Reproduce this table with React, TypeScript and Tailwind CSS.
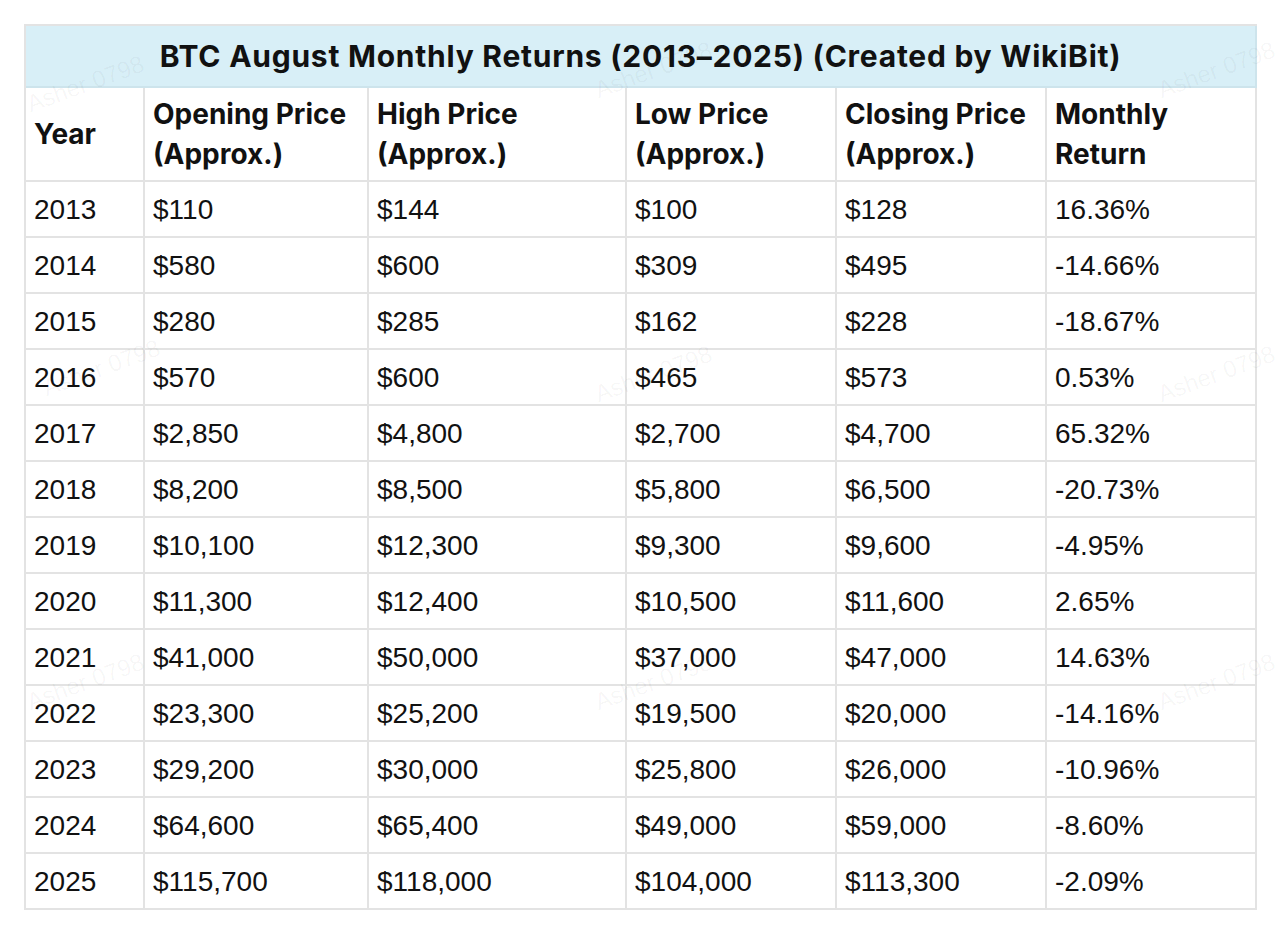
import React from "react";

const rows: string[][] = [
  ["2013", "$110", "$144", "$100", "$128", "16.36%"],
  ["2014", "$580", "$600", "$309", "$495", "-14.66%"],
  ["2015", "$280", "$285", "$162", "$228", "-18.67%"],
  ["2016", "$570", "$600", "$465", "$573", "0.53%"],
  ["2017", "$2,850", "$4,800", "$2,700", "$4,700", "65.32%"],
  ["2018", "$8,200", "$8,500", "$5,800", "$6,500", "-20.73%"],
  ["2019", "$10,100", "$12,300", "$9,300", "$9,600", "-4.95%"],
  ["2020", "$11,300", "$12,400", "$10,500", "$11,600", "2.65%"],
  ["2021", "$41,000", "$50,000", "$37,000", "$47,000", "14.63%"],
  ["2022", "$23,300", "$25,200", "$19,500", "$20,000", "-14.16%"],
  ["2023", "$29,200", "$30,000", "$25,800", "$26,000", "-10.96%"],
  ["2024", "$64,600", "$65,400", "$49,000", "$59,000", "-8.60%"],
  ["2025", "$115,700", "$118,000", "$104,000", "$113,300", "-2.09%"],
];

const headers: string[][] = [
  ["Year"],
  ["Opening Price", "(Approx.)"],
  ["High Price", "(Approx.)"],
  ["Low Price", "(Approx.)"],
  ["Closing Price", "(Approx.)"],
  ["Monthly", "Return"],
];

const marks = [
  { l: 24, t: 66 },
  { l: 592, t: 52 },
  { l: 1155, t: 52 },
  { l: 40, t: 350 },
  { l: 592, t: 356 },
  { l: 1155, t: 356 },
  { l: 24, t: 664 },
  { l: 592, t: 664 },
  { l: 1155, t: 664 },
];

export default function App() {
  return (
    <div className="relative w-[1280px] h-[934px] bg-white overflow-hidden">
      <div className="pt-[24px] pl-[24px]">
        <div className="w-[1233px] border-l-2 border-t-2 border-[#e3e3e3]">
          <div className="h-[62px] flex items-center justify-center bg-[#d8eff7] border-r-2 border-b-2 border-[#cde4ec] font-['Inter',sans-serif] font-bold text-[30px] text-[#111] tracking-[0.75px]">
            BTC August Monthly Returns (2013–2025) (Created by WikiBit)
          </div>
          <div className="grid grid-cols-[119px_224px_258px_210px_210px_210px]">
            {headers.map((h, i) => (
              <div
                key={i}
                className="h-[94px] flex flex-col justify-center pl-[8px] border-r-2 border-b-2 border-[#e3e3e3] font-['Inter',sans-serif] font-bold text-[28px] leading-[40px] text-[#111] whitespace-nowrap"
              >
                {h.map((line, j) => (
                  <span key={j}>{line}</span>
                ))}
              </div>
            ))}
            {rows.map((r, ri) =>
              r.map((c, ci) => (
                <div
                  key={ri + "-" + ci}
                  className="h-[56px] flex items-center pl-[8px] pt-[1px] border-r-2 border-b-2 border-[#e3e3e3] font-['Liberation_Sans',Arial,sans-serif] text-[28px] text-[#111]"
                >
                  {c}
                </div>
              ))
            )}
          </div>
        </div>
      </div>
      {marks.map((m, i) => (
        <div
          key={i}
          className="absolute pointer-events-none select-none whitespace-nowrap font-['Liberation_Sans',Arial,sans-serif] text-[24px] text-[#000]/[0.04] rotate-[-20deg]"
          style={{ left: m.l, top: m.t }}
        >
          Asher 0798
        </div>
      ))}
    </div>
  );
}
